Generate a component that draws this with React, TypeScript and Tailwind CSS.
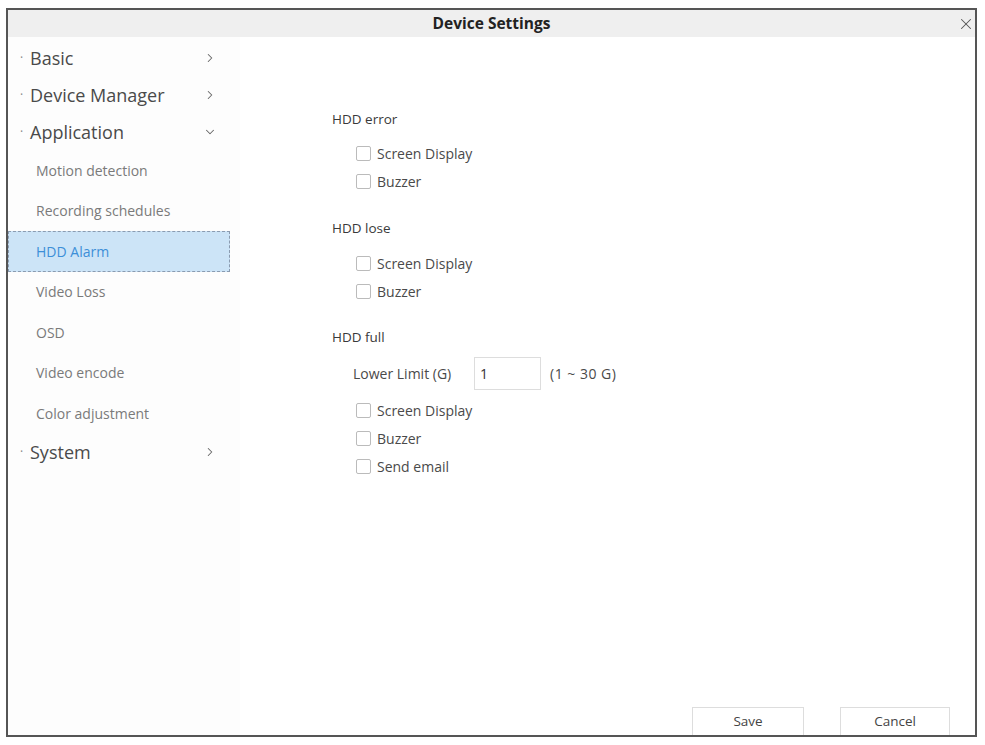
import React from "react";
import { ChevronRight, ChevronDown, X } from "lucide-react";

const font = { fontFamily: '"Open Sans", "Noto Sans", sans-serif' };

function TopItem({ label, open }: { label: string; open?: boolean }) {
  return (
    <div className="flex h-[37px] items-center pl-[12px] pr-[23px]">
      <span className="w-[10px] text-[12px] text-[#888]">·</span>
      <span className="flex-1 text-[18px] leading-none text-[#4a4a4a]">{label}</span>
      {open ? (
        <ChevronDown size={14} strokeWidth={1.8} className="text-[#666]" />
      ) : (
        <ChevronRight size={14} strokeWidth={1.8} className="text-[#666]" />
      )}
    </div>
  );
}

function SubItem({ label, active }: { label: string; active?: boolean }) {
  return (
    <div
      className={
        "flex h-[40.5px] w-[222px] items-center pl-[27px] text-[14px] " +
        (active
          ? "border border-dashed border-[#8a9bb0] bg-[#cce4f7] text-[#3d8fd8]"
          : "border border-transparent text-[#7a7a7a]")
      }
    >
      {label}
    </div>
  );
}

function Check({ label }: { label: string }) {
  return (
    <div className="flex h-[28px] items-center pl-[24px]">
      <span className="h-[15px] w-[15px] rounded-[2px] border border-[#bbb] bg-white" />
      <span className="ml-[6px] text-[14px] text-[#4a4a4a]">{label}</span>
    </div>
  );
}

function GroupTitle({ label, mt }: { label: string; mt: string }) {
  return <div className={"h-[20px] text-[13.5px] leading-[20px] text-[#3a3a3a] " + mt}>{label}</div>;
}

export default function App() {
  return (
    <div className="h-[745px] w-[985px] bg-white pl-[6px] pt-[8px]" style={font}>
      <div className="flex h-[729px] w-[971px] flex-col border-2 border-[#555]">
        {/* title bar */}
        <div className="relative flex h-[27px] items-center justify-center bg-[#efefef]">
          <span className="text-[15.5px] font-bold text-[#222]">Device Settings</span>
          <X size={18} strokeWidth={1.4} className="absolute right-[0px] top-[5px] text-[#555]" />
        </div>

        <div className="flex flex-1">
          {/* navigation */}
          <div className="w-[232px] bg-[#fdfdfd] pt-[2px]">
            <TopItem label="Basic" />
            <TopItem label="Device Manager" />
            <TopItem label="Application" open />
            <SubItem label="Motion detection" />
            <SubItem label="Recording schedules" />
            <SubItem label="HDD Alarm" active />
            <SubItem label="Video Loss" />
            <SubItem label="OSD" />
            <SubItem label="Video encode" />
            <SubItem label="Color adjustment" />
            <TopItem label="System" />
          </div>

          {/* settings form */}
          <div className="flex flex-1 flex-col">
            <div className="pl-[92px]">
              <GroupTitle label="HDD error" mt="mt-[72px]" />
              <div className="mt-[10px]">
                <Check label="Screen Display" />
                <Check label="Buzzer" />
              </div>
              <GroupTitle label="HDD lose" mt="mt-[23px]" />
              <div className="mt-[11px]">
                <Check label="Screen Display" />
                <Check label="Buzzer" />
              </div>
              <GroupTitle label="HDD full" mt="mt-[22px]" />
              <div className="mt-[10px] flex h-[33px] items-center pl-[21px]">
                <span className="w-[121px] text-[14px] text-[#4a4a4a]">Lower Limit (G)</span>
                <div className="flex h-[33px] w-[67px] items-center border border-[#ddd] pl-[5px] text-[14px] text-[#333]">
                  1
                </div>
                <span className="ml-[9px] text-[14px] tracking-[0.5px] text-[#4a4a4a]">(1 ~ 30 G)</span>
              </div>
              <div className="mt-[6px]">
                <Check label="Screen Display" />
                <Check label="Buzzer" />
                <Check label="Send email" />
              </div>
            </div>

            <div className="mt-auto flex justify-end gap-[36px] pr-[25px]">
              <button className="h-[28px] w-[112px] border border-b-0 border-[#ddd] bg-white text-[13.5px] text-[#444]">
                Save
              </button>
              <button className="h-[28px] w-[110px] border border-b-0 border-[#ddd] bg-white text-[13.5px] text-[#444]">
                Cancel
              </button>
            </div>
          </div>
        </div>
      </div>
    </div>
  );
}
